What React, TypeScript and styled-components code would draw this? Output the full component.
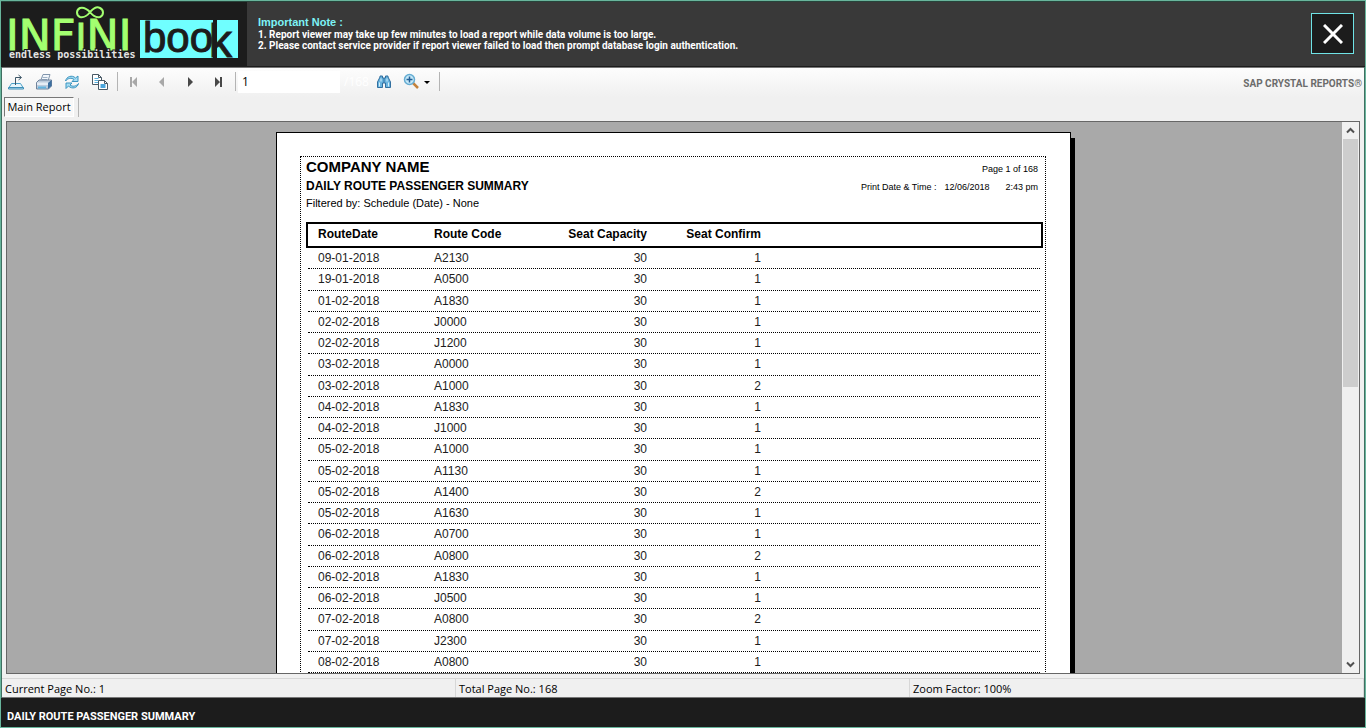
import React from "react";
import styled, { createGlobalStyle } from "styled-components";

const sans = `"Liberation Sans", Arial, sans-serif`;
const narrow = `Roboto, "Liberation Sans", sans-serif`;
const ui = `"Open Sans", "Noto Sans", sans-serif`;

const Global = createGlobalStyle`
  * { box-sizing: border-box; }
  body { margin: 0; font-family: ${sans}; color: #000; }
  button, input { font: inherit; margin: 0; padding: 0; border: 0; background: none; }
`;

const Window = styled.div`
  display: flex;
  flex-direction: column;
  height: 100vh;
  border: 1px solid #68b59c;
  background: #1c1c1c;
  overflow: hidden;
`;

const Header = styled.header`
  display: flex;
  flex: none;
  height: 66px;
  background: #393939;
  border-top: 1px solid #27443b;
  border-bottom: 1px solid #1c1c1c;
`;

const LogoBox = styled.div`
  flex: none;
  width: 246px;
  background: #1c1c1c;
`;

const Notes = styled.section`
  flex: 1;
  padding: 13px 0 0 11px;
  color: #fff;
  font-family: ${narrow};
  font-size: 10px;
  font-weight: bold;
  line-height: 11px;
`;

const NoteTitle = styled.h2`
  margin: 0;
  color: #7df3f5;
  font-family: ${sans};
  font-size: 11px;
  line-height: 14px;
`;

const NoteList = styled.ol`
  margin: 0;
  padding: 0;
`;

const NoteLine = styled.li`
  white-space: nowrap;
  list-style: none;
`;

const CloseButton = styled.button`
  display: grid;
  place-items: center;
  width: 43px;
  height: 41px;
  margin: 11px 11px 0 0;
  border: 1px solid #6fe3e6;
  background: #1c1c1c;
`;

const Viewer = styled.main`
  display: flex;
  flex: 1;
  flex-direction: column;
  min-height: 0;
  background: #f0f0f0;
  border: 1px solid #3f6f61;
  border-width: 0 1px;
`;

const Toolbar = styled.div`
  display: flex;
  flex: none;
  align-items: center;
  height: 30px;
  padding: 0 2px 2px 0;
  border-top: 1px solid #777;
  background: linear-gradient(#fdfdfd, #f0f0f0);
`;

const ToolButton = styled.button<{ $w?: number }>`
  display: grid;
  flex: none;
  place-items: center;
  width: ${(p) => p.$w ?? 28}px;
  height: 24px;
`;

const Divider = styled.span`
  flex: none;
  width: 1px;
  height: 19px;
  margin: 0 2px 0 3px;
  background: #b4b4b4;
`;

const PageInput = styled.input`
  width: 102px;
  height: 22px;
  padding: 0 4px;
  background: #fff;
  font-family: ${ui};
  font-size: 12px;
  line-height: 16px;
`;

const PageTotal = styled.span`
  width: 30px;
  padding-left: 4px;
  color: #fff;
  font-family: ${ui};
  font-size: 12px;
`;

const Brand = styled.span`
  margin-left: auto;
  padding-top: 4px;
  color: #6b6b6b;
  font-family: ${narrow};
  font-size: 10px;
  font-weight: bold;
  white-space: nowrap;
`;

const Tabs = styled.div`
  display: flex;
  flex: none;
  align-items: center;
  height: 24px;
  padding: 0 0 4px 2px;
  gap: 1px;
`;

const Tab = styled.button`
  width: 70px;
  height: 20px;
  border: 1px solid;
  border-color: #777 #fff #fff #777;
  background: #f8f8f8;
  font-family: ${ui};
  font-size: 11px;
  line-height: 18px;
  white-space: nowrap;
`;

const Viewport = styled.div`
  display: flex;
  flex: 1;
  min-height: 0;
  margin: 0 4px;
  border: 1px solid #666;
  background: #a9a9a9;
`;

const Canvas = styled.div`
  flex: 1;
  overflow: hidden;
  padding: 10px 2px 0 0;
`;

const Paper = styled.article`
  width: 795px;
  min-height: 1123px;
  margin: 0 auto;
  padding: 23px 24px 23px 23px;
  border: 1px solid #000;
  background: #fff;
  box-shadow: 4px 6px 0 #000;
`;

const Sheet = styled.div`
  min-height: 1060px;
  padding: 0 2px 0 5px;
  border: 1px dotted #000;
`;

const SheetHead = styled.div`
  display: flex;
  justify-content: space-between;
  height: 65px;
`;

const Company = styled.h1`
  margin: 0;
  font-size: 15px;
  line-height: 20px;
`;

const ReportTitle = styled.h2`
  margin: 0;
  font-size: 12px;
  line-height: 18px;
`;

const Filter = styled.p`
  margin: 0;
  font-size: 11px;
  line-height: 17px;
`;

const PrintInfo = styled.div`
  padding: 3px 5px 0 0;
  font-size: 9px;
  line-height: 18px;
  text-align: right;
`;

const PrintRow = styled.div`
  display: flex;
  justify-content: flex-end;
`;

const PrintDate = styled.span`
  margin: 0 16px 0 8px;
`;

const Table = styled.table`
  display: block;
  font-size: 12px;
`;

const Head = styled.thead`
  display: block;
  height: 26px;
  border: 2px solid #000;
  line-height: 20px;
`;

const Body = styled.tbody`
  display: block;
  margin: 0 3px 0 2px;
`;

const columns = "116px 100px 113px 114px";

const HeadRow = styled.tr`
  display: grid;
  grid-template-columns: ${columns};
  padding-left: 10px;
`;

const Row = styled.tr`
  display: grid;
  grid-template-columns: ${columns};
  height: 21px;
  padding-left: 10px;
  border-bottom: 1px dotted #000;
  line-height: 20px;
  color: #1c1c1c;
  &:nth-child(4n + 2) { height: 22px; }
`;

const Th = styled.th<{ $right?: boolean }>`
  padding: 0;
  text-align: ${(p) => (p.$right ? "right" : "left")};
  white-space: nowrap;
`;

const Td = styled.td<{ $right?: boolean }>`
  padding: 0;
  text-align: ${(p) => (p.$right ? "right" : "left")};
`;

const Scrollbar = styled.div`
  display: flex;
  flex: none;
  flex-direction: column;
  width: 17px;
  background: #f0f0f0;
`;

const ScrollButton = styled.button`
  display: grid;
  place-items: center;
  height: 17px;
`;

const Track = styled.div`
  flex: 1;
`;

const Thumb = styled.div`
  height: 48%;
  background: #cdcdcd;
  margin: 0 1px;
`;

const StatusBar = styled.div`
  display: grid;
  flex: none;
  grid-template-columns: 1fr 1fr 1fr;
  height: 20px;
  margin-top: 4px;
  border-top: 1px solid #d7d7d7;
  border-bottom: 1px solid #777;
  font-family: ${ui};
  font-size: 11px;
  line-height: 20px;
`;

const Status = styled.span`
  height: 18px;
  padding-left: 3px;
  border-right: 1px solid #d7d7d7;
`;

const Footer = styled.footer`
  flex: none;
  height: 29px;
  padding: 4px 6px 0;
  color: #fff;
  font-family: ${narrow};
  font-size: 11px;
  font-weight: bold;
  line-height: 29px;
`;

const Logo = () => (
  <svg width="246" height="64" viewBox="0 2 246 64" role="img" aria-label="INFINIbook endless possibilities">
    <text x="5" y="50" fontFamily="DejaVu Sans, sans-serif" fontSize="43" fill="#a3ff70" stroke="#a3ff70" strokeWidth="1">
      INF<tspan fontSize="37">I</tspan>NI
    </text>
    <path
      d="M89 12 C85 8 82 7 79 8 C75 10 75 15 79 17 C83 18 87 15 89 12 C92 9 95 6 99 8 C103 10 103 15 99 17 C95 18 92 16 89 12Z"
      fill="none" stroke="#a3ff70" strokeWidth="2"
    />
    <rect x="139" y="20" width="98" height="38" fill="#70ffff" />
    <rect x="212" y="20" width="4" height="38" fill="#1c1c1c" />
    <g fontFamily="Liberation Sans, sans-serif" fill="#1c1c1c" stroke="#1c1c1c">
      <text x="142" y="52" fontSize="42" strokeWidth="1">boo</text>
      <text x="208" y="57" fontSize="46" strokeWidth="1">k</text>
    </g>
    <text x="8" y="58" fontFamily="DejaVu Sans Mono, monospace" fontWeight="bold" fontSize="10" fill="#e4e4e4" stroke="#1c1c1c" strokeWidth="2" paintOrder="stroke">endless possibilities</text>
  </svg>
);

const ExportIcon = () => (
  <svg width="18" height="18" viewBox="0 0 18 18" fill="none">
    <path d="M4.500 10.500h9l2.500 4h-14z" fill="#e6f5fb" stroke="#4aa0c8" />
    <path d="M1.500 14.500h15v1.500h-15z" fill="#bfe3f2" stroke="#3f8fb8" />
    <path d="M8.500 12V4.500H14M11.500 2l3 2.500-3 2.500" stroke="#3c5566" />
  </svg>
);

const PrintIcon = () => (
  <svg width="18" height="18" viewBox="0 0 18 18" fill="none">
    <path d="M5.500 8 8 1.500h7L13 8z" fill="#f2f7fc" stroke="#8296ad" />
    <path d="M7.500 4.500h5M7 6.500h5" stroke="#9fb2c6" />
    <path d="M1.500 9.500 4 7h12.500v6l-3 3h-12z" fill="#bccbdc" stroke="#6f839c" />
    <path d="M13 10l3.500-3v6l-3.500 3z" fill="#3c6f9f" />
    <path d="M2 9.500h11V12H2z" fill="#e6edf5" />
    <path d="M3 13.500h8v2H3z" fill="#62b4e0" />
  </svg>
);

const RefreshIcon = () => (
  <svg width="18" height="18" viewBox="0 0 18 18">
    <path d="M2.500 8C3.500 3.500 9 1.500 12.500 5L15 3v5.500H9L11 6.500C8.500 4.500 5 5 2.500 8z" fill="#a5dcf3" stroke="#3d95c0" />
    <path d="M15.500 10.500c-1 4.500-6.500 6-10 2.500L3 15.500V10h6l-2 2c2.500 2 6 1.500 8.500-1.500z" fill="#a5dcf3" stroke="#3d95c0" />
  </svg>
);

const CopyIcon = () => (
  <svg width="18" height="18" viewBox="0 0 18 18" fill="none">
    <path d="M1.500 1.500h6l3 3v7h-9z" fill="#fff" stroke="#4a5a66" />
    <path d="M3.500 5.500h4M3.500 7.500h4M3.500 9.500h4" stroke="#5ab0dc" />
    <path d="M7.500 7.500h6l3 3v6h-9z" fill="#fff" stroke="#4a5a66" />
    <path d="M13.500 7.500v3h3M7.500 1.500v3h3" stroke="#4a5a66" />
    <path d="M9.500 12h5M9.500 14h5" stroke="#4aa5dc" strokeWidth="2" />
  </svg>
);

const NavIcon = ({ d, color }: { d: string; color: string }) => (
  <svg width="10" height="10" viewBox="0 0 10 10"><path d={d} fill={color} /></svg>
);

const FindIcon = () => (
  <svg width="16" height="16" viewBox="0 0 16 16" fill="none">
    <path d="M1.500 13.500V8L4 3V2h2.500v2h3V2H12v1l2.500 5v5.500h-5V9h-3v4.500z" fill="#69b4df" stroke="#316f9f" />
    <path d="M3.500 8.500v4M12.500 8.500v4M5 4.500v3M11 4.500v3" stroke="#d5effb" />
    <path d="M8 4v5" stroke="#316f9f" />
  </svg>
);

const ZoomIcon = () => (
  <svg width="28" height="18" viewBox="0 0 28 18" fill="none">
    <path d="M10 10l5 5" stroke="#c4823c" strokeWidth="2.500" />
    <circle cx="6.500" cy="6.500" r="5" fill="#c6e9f8" stroke="#65acd2" strokeWidth="1.500" />
    <path d="M6.500 3.500v6M3.500 6.500h6" stroke="#245f96" strokeWidth="1.500" />
    <path d="M21 8h6l-3 3z" fill="#000" />
  </svg>
);

const Chevron = ({ d }: { d: string }) => (
  <svg width="9" height="7" viewBox="0 0 9 7"><path d={d} fill="none" stroke="#505050" strokeWidth="2" /></svg>
);

const rows: [string, string, number][] = [
  ["09-01-2018", "A2130", 1],
  ["19-01-2018", "A0500", 1],
  ["01-02-2018", "A1830", 1],
  ["02-02-2018", "J0000", 1],
  ["02-02-2018", "J1200", 1],
  ["03-02-2018", "A0000", 1],
  ["03-02-2018", "A1000", 2],
  ["04-02-2018", "A1830", 1],
  ["04-02-2018", "J1000", 1],
  ["05-02-2018", "A1000", 1],
  ["05-02-2018", "A1130", 1],
  ["05-02-2018", "A1400", 2],
  ["05-02-2018", "A1630", 1],
  ["06-02-2018", "A0700", 1],
  ["06-02-2018", "A0800", 2],
  ["06-02-2018", "A1830", 1],
  ["06-02-2018", "J0500", 1],
  ["07-02-2018", "A0800", 2],
  ["07-02-2018", "J2300", 1],
  ["08-02-2018", "A0800", 1],
];

export default function App() {
  return (
    <Window>
      <Global />
      <Header>
        <LogoBox><Logo /></LogoBox>
        <Notes>
          <NoteTitle>Important Note :</NoteTitle>
          <NoteList>
            <NoteLine>1. Report viewer may take up few minutes to load a report while data volume is too large.</NoteLine>
            <NoteLine>2. Please contact service provider if report viewer failed to load then prompt database login authentication.</NoteLine>
          </NoteList>
        </Notes>
        <CloseButton aria-label="Close">
          <svg width="20" height="20" viewBox="0 0 20 20"><path d="M1 1l18 18M19 1L1 19" stroke="#fff" strokeWidth="3" /></svg>
        </CloseButton>
      </Header>
      <Viewer>
        <Toolbar>
          <ToolButton aria-label="Export"><ExportIcon /></ToolButton>
          <ToolButton aria-label="Print"><PrintIcon /></ToolButton>
          <ToolButton aria-label="Refresh"><RefreshIcon /></ToolButton>
          <ToolButton aria-label="Copy"><CopyIcon /></ToolButton>
          <Divider />
          <ToolButton aria-label="First page"><NavIcon color="#a8a8a8" d="M1 0h2v10H1zM8 0v10L3 5z" /></ToolButton>
          <ToolButton aria-label="Previous page"><NavIcon color="#a8a8a8" d="M7 0v10L2 5z" /></ToolButton>
          <ToolButton aria-label="Next page"><NavIcon color="#484848" d="M3 0v10l5-5z" /></ToolButton>
          <ToolButton aria-label="Last page"><NavIcon color="#484848" d="M2 0v10l5-5zM7 0h2v10H7z" /></ToolButton>
          <Divider />
          <PageInput aria-label="Page number" defaultValue="1" />
          <PageTotal>/168</PageTotal>
          <ToolButton aria-label="Find"><FindIcon /></ToolButton>
          <ToolButton $w={38} aria-label="Zoom"><ZoomIcon /></ToolButton>
          <Divider />
          <Brand>SAP CRYSTAL REPORTS®</Brand>
        </Toolbar>
        <Tabs>
          <Tab>Main Report</Tab>
          <Divider />
        </Tabs>
        <Viewport>
          <Canvas>
            <Paper>
              <Sheet>
                <SheetHead>
                  <div>
                    <Company>COMPANY NAME</Company>
                    <ReportTitle>DAILY ROUTE PASSENGER SUMMARY</ReportTitle>
                    <Filter>Filtered by: Schedule (Date) - None</Filter>
                  </div>
                  <PrintInfo>
                    <div>Page 1 of 168</div>
                    <PrintRow>
                      <span>Print Date &amp; Time :</span>
                      <PrintDate>12/06/2018</PrintDate>
                      <span>2:43 pm</span>
                    </PrintRow>
                  </PrintInfo>
                </SheetHead>
                <Table>
                  <Head>
                    <HeadRow>
                      <Th>RouteDate</Th>
                      <Th>Route Code</Th>
                      <Th $right>Seat Capacity</Th>
                      <Th $right>Seat Confirm</Th>
                    </HeadRow>
                  </Head>
                  <Body>
                    {rows.map(([date, code, confirm], i) => (
                      <Row key={i}>
                        <Td>{date}</Td>
                        <Td>{code}</Td>
                        <Td $right>30</Td>
                        <Td $right>{confirm}</Td>
                      </Row>
                    ))}
                  </Body>
                </Table>
              </Sheet>
            </Paper>
          </Canvas>
          <Scrollbar>
            <ScrollButton aria-label="Scroll up"><Chevron d="M1 5.500l3.500-3.500L8 5.500" /></ScrollButton>
            <Track><Thumb /></Track>
            <ScrollButton aria-label="Scroll down"><Chevron d="M1 1.500L4.500 5 8 1.500" /></ScrollButton>
          </Scrollbar>
        </Viewport>
        <StatusBar>
          <Status>Current Page No.: 1</Status>
          <Status>Total Page No.: 168</Status>
          <Status>Zoom Factor: 100%</Status>
        </StatusBar>
      </Viewer>
      <Footer>DAILY ROUTE PASSENGER SUMMARY</Footer>
    </Window>
  );
}
